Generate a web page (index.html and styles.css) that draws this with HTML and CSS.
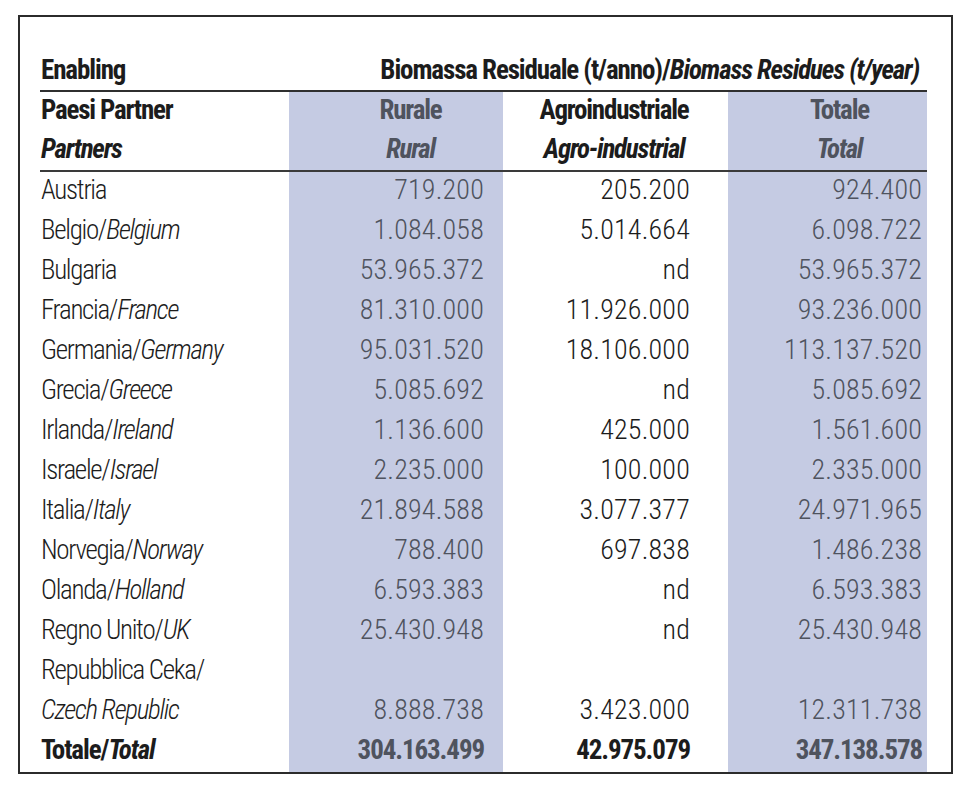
FILE: index.html
```html
<!DOCTYPE html>
<html lang="it">
<head>
<meta charset="utf-8">
<title>Enabling – Biomassa Residuale</title>
<link rel="stylesheet" href="styles.css">
</head>
<body>
<div class="frame">
  <table class="data">
    <colgroup>
      <col class="c-name">
      <col class="c-rural">
      <col class="c-agro">
      <col class="c-tot">
    </colgroup>
    <thead>
      <tr class="title-row">
        <th class="name">Enabling</th>
        <th class="title" colspan="3">Biomassa Residuale (t/anno)/<i>Biomass Residues (t/year)</i></th>
      </tr>
      <tr class="head-row">
        <th class="name">Paesi Partner</th>
        <th class="hd shade hd-rural">Rurale</th>
        <th class="hd hd-agro">Agroindustriale</th>
        <th class="hd shade hd-tot">Totale</th>
      </tr>
      <tr class="head-row head-last">
        <th class="name"><i>Partners</i></th>
        <th class="hd shade hd-rural"><i>Rural</i></th>
        <th class="hd hd-agro"><i>Agro-industrial</i></th>
        <th class="hd shade hd-tot"><i>Total</i></th>
      </tr>
    </thead>
    <tbody>
      <tr><td class="name">Austria</td><td class="num shade n1">719.200</td><td class="num n2">205.200</td><td class="num shade n3">924.400</td></tr>
      <tr><td class="name">Belgio/<i>Belgium</i></td><td class="num shade n1">1.084.058</td><td class="num n2">5.014.664</td><td class="num shade n3">6.098.722</td></tr>
      <tr><td class="name">Bulgaria</td><td class="num shade n1">53.965.372</td><td class="num n2">nd</td><td class="num shade n3">53.965.372</td></tr>
      <tr><td class="name">Francia/<i>France</i></td><td class="num shade n1">81.310.000</td><td class="num n2">11.926.000</td><td class="num shade n3">93.236.000</td></tr>
      <tr><td class="name">Germania/<i>Germany</i></td><td class="num shade n1">95.031.520</td><td class="num n2">18.106.000</td><td class="num shade n3">113.137.520</td></tr>
      <tr><td class="name">Grecia/<i>Greece</i></td><td class="num shade n1">5.085.692</td><td class="num n2">nd</td><td class="num shade n3">5.085.692</td></tr>
      <tr><td class="name">Irlanda/<i>Ireland</i></td><td class="num shade n1">1.136.600</td><td class="num n2">425.000</td><td class="num shade n3">1.561.600</td></tr>
      <tr><td class="name">Israele/<i>Israel</i></td><td class="num shade n1">2.235.000</td><td class="num n2">100.000</td><td class="num shade n3">2.335.000</td></tr>
      <tr><td class="name">Italia/<i>Italy</i></td><td class="num shade n1">21.894.588</td><td class="num n2">3.077.377</td><td class="num shade n3">24.971.965</td></tr>
      <tr><td class="name">Norvegia/<i>Norway</i></td><td class="num shade n1">788.400</td><td class="num n2">697.838</td><td class="num shade n3">1.486.238</td></tr>
      <tr><td class="name">Olanda/<i>Holland</i></td><td class="num shade n1">6.593.383</td><td class="num n2">nd</td><td class="num shade n3">6.593.383</td></tr>
      <tr><td class="name">Regno Unito/<i>UK</i></td><td class="num shade n1">25.430.948</td><td class="num n2">nd</td><td class="num shade n3">25.430.948</td></tr>
      <tr><td class="name">Repubblica Ceka/</td><td class="num shade n1"></td><td class="num n2"></td><td class="num shade n3"></td></tr>
      <tr><td class="name"><i>Czech Republic</i></td><td class="num shade n1">8.888.738</td><td class="num n2">3.423.000</td><td class="num shade n3">12.311.738</td></tr>
      <tr class="total"><td class="name">Totale/<i>Total</i></td><td class="num shade n1">304.163.499</td><td class="num n2">42.975.079</td><td class="num shade n3">347.138.578</td></tr>
    </tbody>
  </table>
</div>
</body>
</html>
```

FILE: styles.css
```css
html, body {
  margin: 0;
  padding: 0;
  background: #ffffff;
}

body {
  font-family: "Roboto Condensed", "Liberation Sans Narrow", "Roboto", sans-serif;
  font-stretch: condensed;
  color: #1c1c1c;
}

.frame {
  margin: 15px 0 0 18px;
  width: 887px;
  border: 2px solid #2b2b2b;
  padding: 0 24px 0 20px;
}

.data {
  border-collapse: collapse;
  border-spacing: 0;
  width: 887px;
  table-layout: fixed;
  font-size: 27px;
  font-weight: 300;
}

.c-name { width: 249px; }
.c-rural { width: 214px; }
.c-agro { width: 225px; }
.c-tot { width: 199px; }

.data th,
.data td {
  padding: 0;
  line-height: 36px;
  white-space: nowrap;
  vertical-align: top;
}

.data i {
  font-style: italic;
}

/* title row */
.data .title-row th {
  padding: 35px 0 2px 0;
  border-bottom: 2px solid #2f2f2f;
  font-weight: 700;
  letter-spacing: -1.1px;
}

.data .title-row .name {
  text-align: left;
  padding-left: 1px;
}

.data .title-row .title {
  text-align: right;
  padding-right: 8px;
}

/* header rows */
.data .head-row th {
  font-weight: 700;
  padding-bottom: 3px;
  letter-spacing: -1.2px;
}

.data .head-row .name {
  text-align: left;
  padding-left: 1px;
}

.data .head-last th {
  border-bottom: 2px solid #3a3a3a;
}

.data .hd {
  text-align: center;
}

.data .head-row .hd-rural { padding-left: 29px; }
.data .head-row .hd-agro { padding-right: 3px; }
.data .head-row .hd-tot { padding-left: 24px; }

/* body rows */
.data td {
  padding-bottom: 4px;
}

.data td.name {
  text-align: left;
  padding-left: 1px;
  letter-spacing: -1.3px;
}

.data .num {
  text-align: right;
  font-size: 28px;
  letter-spacing: 0.2px;
}

.data td.n1 { padding-right: 19px; }
.data td.n2 { padding-right: 38px; }
.data td.n3 { padding-right: 5px; }

.data .shade {
  background: #c5cbe3;
  color: #4f535e;
}

.data .total td {
  font-weight: 700;
  letter-spacing: -1.1px;
}

.data .total td.num {
  font-size: 27px;
}
```
